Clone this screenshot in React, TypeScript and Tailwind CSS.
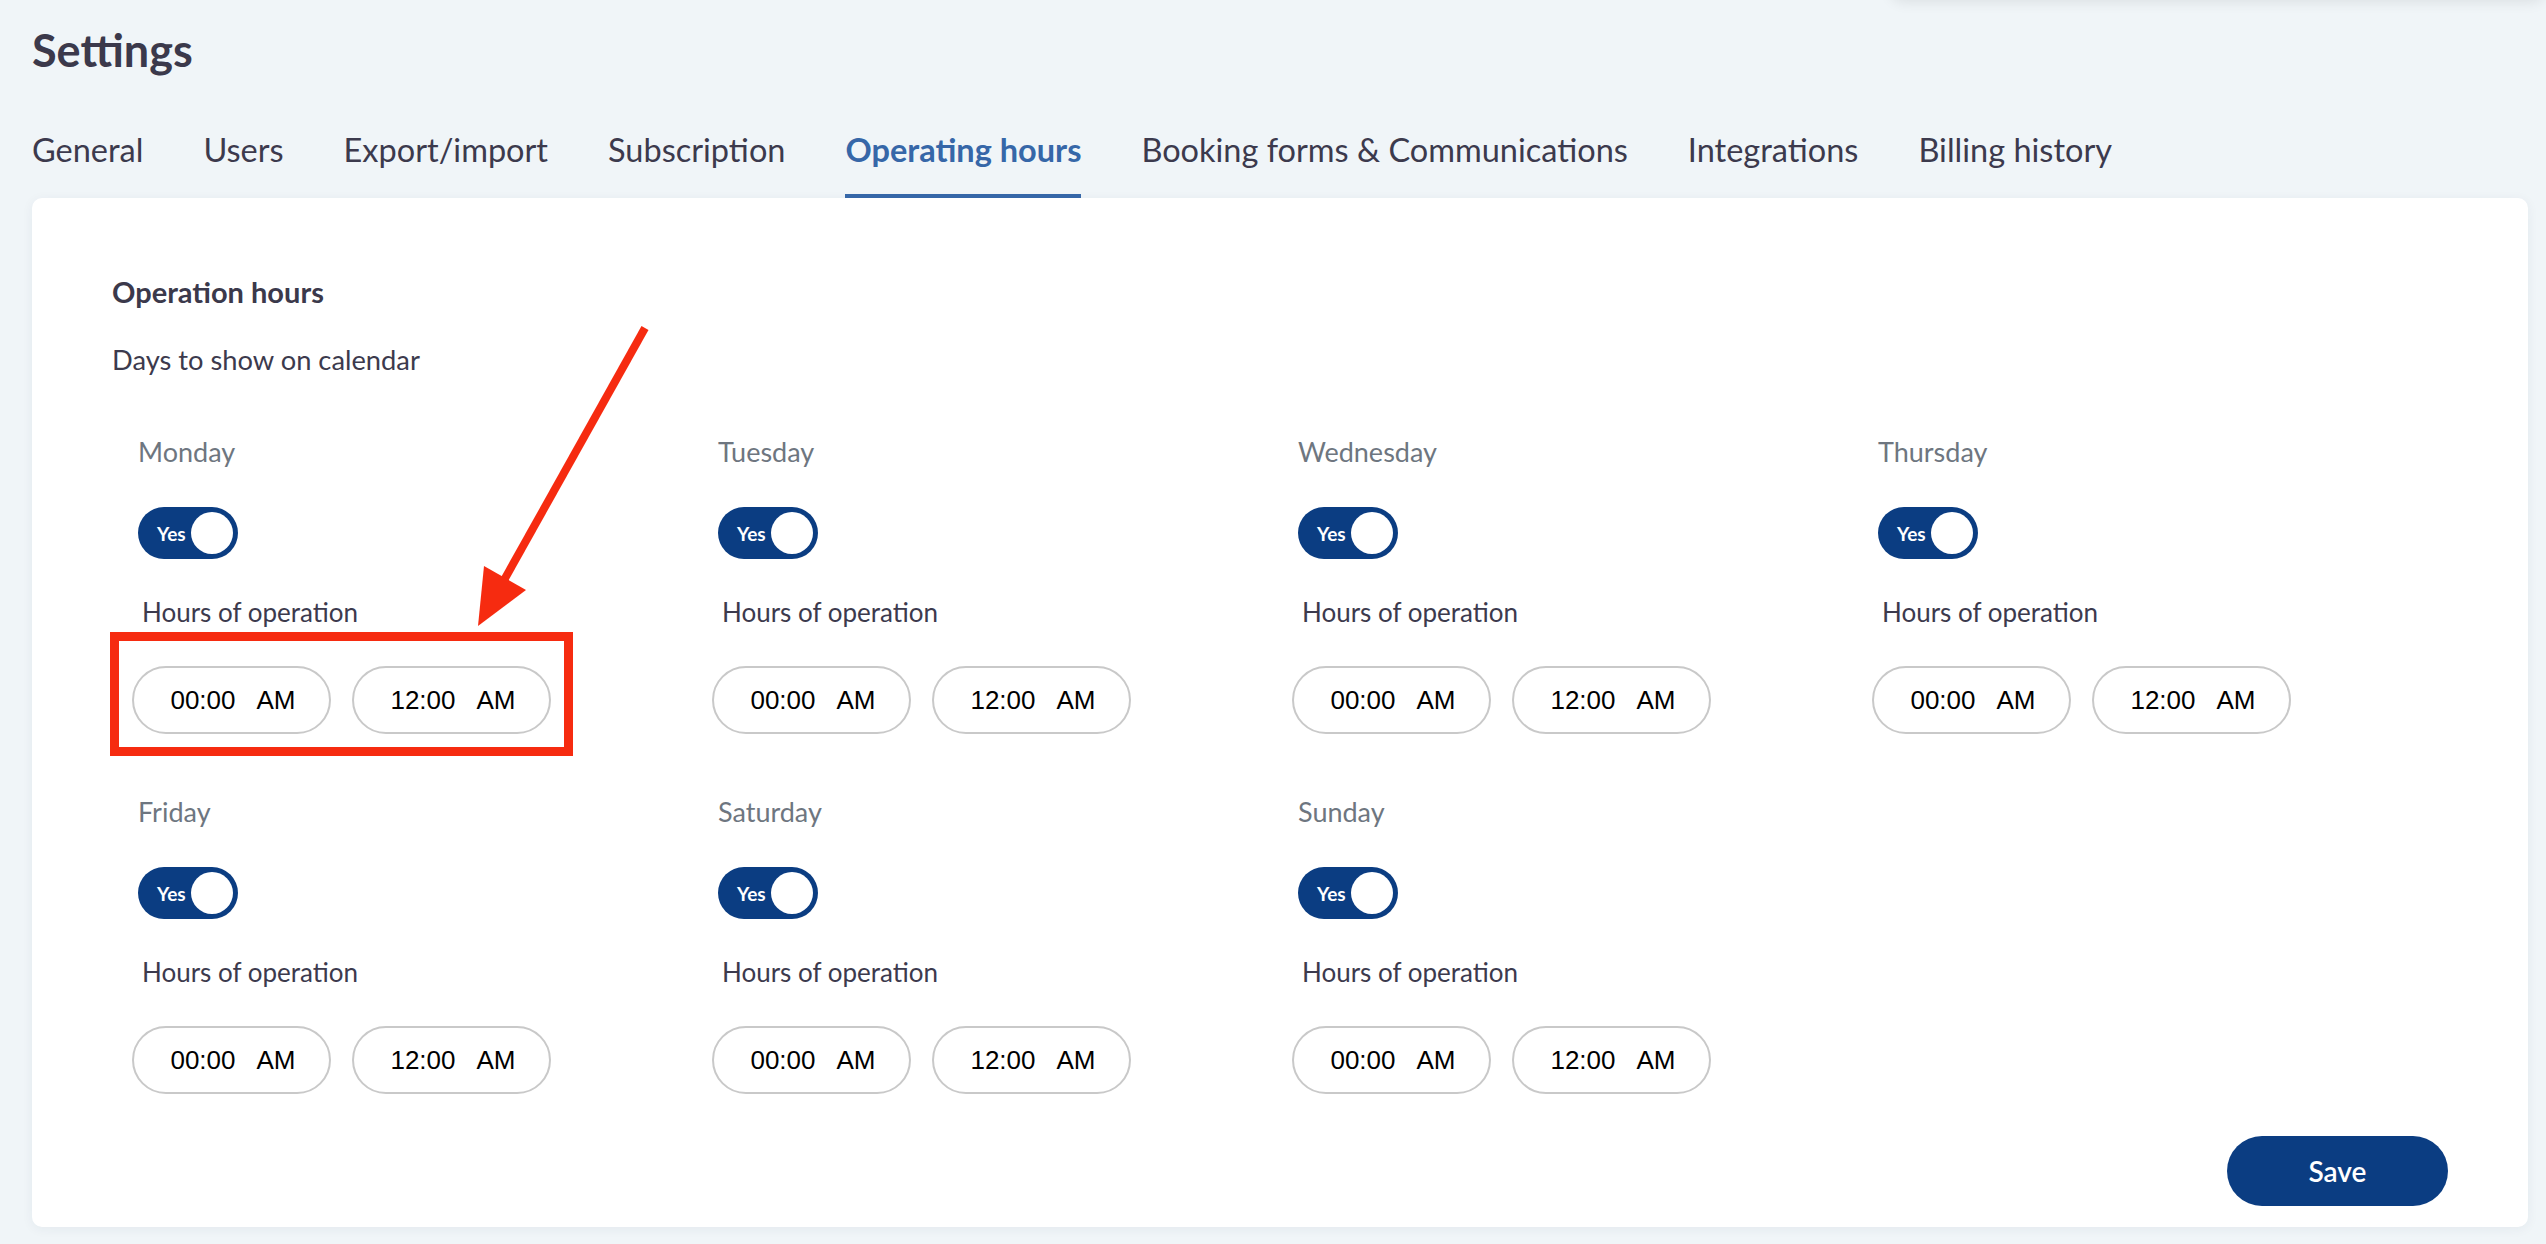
const tabs = [
  "General",
  "Users",
  "Export/import",
  "Subscription",
  "Operating hours",
  "Booking forms & Communications",
  "Integrations",
  "Billing history",
];

const days = [
  "Monday",
  "Tuesday",
  "Wednesday",
  "Thursday",
  "Friday",
  "Saturday",
  "Sunday",
];

function Toggle() {
  return (
    <div className="w-[100px] h-[52px] rounded-full bg-[#0b3d82] flex items-center justify-between pl-[19px] pr-[5px]">
      <span className="text-white text-[19px] font-bold leading-none">Yes</span>
      <span className="w-[42px] h-[42px] rounded-full bg-white" />
    </div>
  );
}

function TimeField({ time }: { time: string }) {
  return (
    <div className="w-[199px] h-[68px] rounded-full border-2 border-[#c9c9c9] bg-white flex items-center justify-center gap-[21px] pl-[3px] font-['Liberation_Sans',Arial,sans-serif] text-[26px] text-black">
      <span>{time}</span>
      <span>AM</span>
    </div>
  );
}

function DayCell({ day }: { day: string }) {
  return (
    <div className="flex flex-col">
      <div className="pl-[6px] text-[27px] leading-[32px] text-[#6e7680]">{day}</div>
      <div className="mt-[39px] ml-[6px]">
        <Toggle />
      </div>
      <div className="mt-[37px] pl-[10px] text-[26px] leading-[32px] text-[#3c3a4d]">
        Hours of operation
      </div>
      <div className="mt-[38px] flex gap-[21px]">
        <TimeField time="00:00" />
        <TimeField time="12:00" />
      </div>
    </div>
  );
}

export default function App() {
  return (
    <div className="relative min-h-screen w-full overflow-hidden bg-[#f0f5f8] font-['Lato',sans-serif] pl-[32px] pr-[18px] pb-[17px]">
      {/* edge of the header dropdown above the viewport */}
      <div className="absolute left-[1890px] right-0 top-[-40px] h-[40px] rounded-[14px] bg-[#f0f5f8] shadow-[0_2px_14px_rgba(0,0,0,0.09)]" />

      <h1 className="pt-[22px] text-[45px] leading-[56px] font-bold text-[#3b394b]">Settings</h1>

      <nav className="mt-[52px] flex gap-[60px]">
        {tabs.map((t) => {
          const active = t === "Operating hours";
          return (
            <div key={t} className="flex flex-col">
              <span
                className={
                  active
                    ? "text-[32.5px] leading-[40px] font-bold text-[#3667a8]"
                    : "text-[32.5px] leading-[40px] text-[#3c3a4d]"
                }
              >
                {t}
              </span>
              <span className={active ? "mt-[24px] h-[4px] bg-[#3667a8]" : "mt-[24px] h-[4px]"} />
            </div>
          );
        })}
      </nav>

      <main className="rounded-[10px] bg-white shadow-[0_2px_12px_rgba(30,50,80,0.06)] pt-[76px] pl-[80px] pr-[80px] pb-[21px]">
        <h2 className="text-[29px] leading-[36px] font-bold text-[#3b394b]">Operation hours</h2>
        <p className="mt-[34px] text-[27.3px] leading-[32px] text-[#3c3a4d]">Days to show on calendar</p>

        <div className="mt-[60px] ml-[20px] grid grid-cols-[repeat(4,580px)] gap-y-[62px]">
          {days.map((d) => (
            <DayCell key={d} day={d} />
          ))}
        </div>

        <div className="mt-[42px] flex justify-end">
          <button className="w-[221px] h-[70px] rounded-full bg-[#0b3d82] text-white text-[28px] font-semibold">
            Save
          </button>
        </div>
      </main>

      {/* red annotation */}
      <div className="absolute left-[110px] top-[632px] w-[463px] h-[124px] border-[9px] border-[#f62b10]" />
      <svg className="absolute left-0 top-0" width="700" height="700" viewBox="0 0 700 700">
        <line x1="645" y1="328" x2="503" y2="582" stroke="#f62b10" strokeWidth="8" />
        <polygon points="478,626 484,566 526,590" fill="#f62b10" />
      </svg>
    </div>
  );
}
